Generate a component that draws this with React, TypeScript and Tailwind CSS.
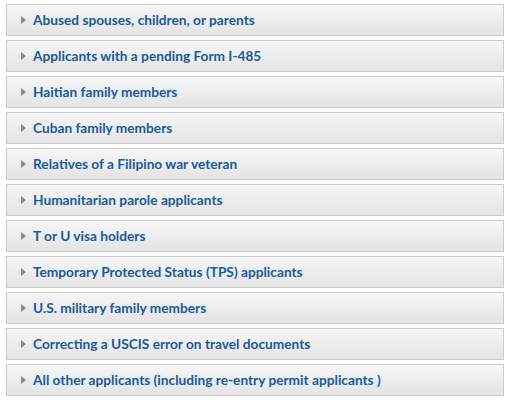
// Accordion list of eligibility categories

const items = [
  'Abused spouses, children, or parents',
  'Applicants with a pending Form I-485',
  'Haitian family members',
  'Cuban family members',
  'Relatives of a Filipino war veteran',
  'Humanitarian parole applicants',
  'T or U visa holders',
  'Temporary Protected Status (TPS) applicants',
  'U.S. military family members',
  'Correcting a USCIS error on travel documents',
  'All other applicants (including re-entry permit applicants )',
]

function Caret() {
  return (
    <svg width="5" height="8" viewBox="0 0 5 8" className="shrink-0">
      <path d="M0 0 L5 4 L0 8 Z" fill="#8a8a8a" />
    </svg>
  )
}

export default function App() {
  return (
    <div className="w-[512px] h-[404px] bg-white pt-[4px] pl-[6px] pr-[8px] font-['Lato',sans-serif]">
      <div className="flex flex-col gap-[4px]">
        {items.map((label) => (
          <div
            key={label}
            className="flex h-[32px] items-center gap-[7px] border border-[#cccccc] bg-gradient-to-b from-[#f6f6f6] to-[#e4e4e4] pl-[14px]"
          >
            <Caret />
            <span className="text-[13.7px] font-bold text-[#1b5a98] leading-none">{label}</span>
          </div>
        ))}
      </div>
    </div>
  )
}
